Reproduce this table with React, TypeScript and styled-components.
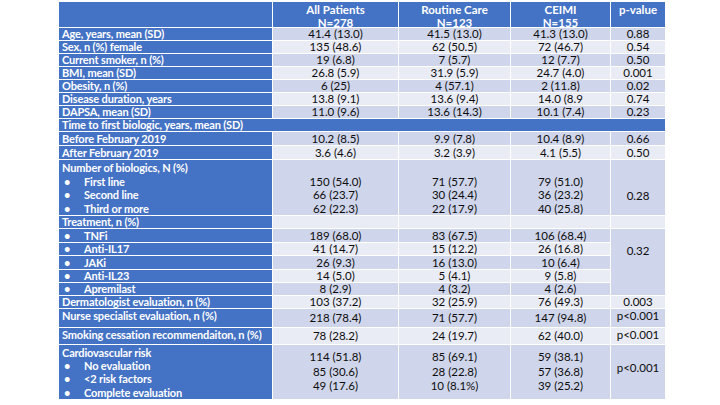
import React from "react";
import styled, { createGlobalStyle } from "styled-components";

/* ===================== STYLES ===================== */

const GlobalStyle = createGlobalStyle`
  html, body {
    margin: 0;
    padding: 0;
    background: #ffffff;
  }
  body {
    font-family: Lato, "Liberation Sans", sans-serif;
  }
`;

const Page = styled.div`
  width: 720px;
  height: 405px;
  padding: 2px 0 0 59px;
  box-sizing: border-box;
  background: #ffffff;
`;

const Table = styled.div`
  display: grid;
  grid-template-columns: 213px 125px 111px 99px 54px;
  grid-template-rows:
    25px repeat(8, 12px) 13px 13px 55px 12px 13px 12px 13px 12px 12px
    12px 18px 16px 54px;
  gap: 1px;
  font-size: 11px;
  line-height: 12px;
`;

type Tone = "dark" | "light";

const toneColor = (t: Tone) => (t === "dark" ? "#cfd5ea" : "#e9ebf5");

const HeadCell = styled.div`
  background: #4472c4;
  color: #ffffff;
  font-weight: 700;
  font-size: 11.5px;
  text-align: center;
  padding-top: 2px;
`;

const LabelCell = styled.div<{ $top?: boolean }>`
  background: #4472c4;
  color: #ffffff;
  font-weight: 700;
  letter-spacing: -0.15px;
  padding: ${({ $top }) => ($top ? "1px 0 0 3px" : "0 0 0 3px")};
  display: flex;
  flex-direction: column;
  justify-content: ${({ $top }) => ($top ? "flex-start" : "center")};
  white-space: nowrap;
  overflow: hidden;
`;

const SectionCell = styled(LabelCell)`
  grid-column: 1 / -1;
`;

const DataCell = styled.div<{ $tone: Tone; $rows?: number; $pt?: number }>`
  background: ${({ $tone }) => toneColor($tone)};
  color: #0d0d0d;
  font-size: 11.5px;
  text-align: center;
  display: flex;
  flex-direction: column;
  justify-content: ${({ $pt }) => ($pt !== undefined ? "flex-start" : "center")};
  padding-top: ${({ $pt }) => ($pt ?? 0)}px;
  grid-row: ${({ $rows }) => ($rows ? `span ${$rows}` : "auto")};
  white-space: nowrap;
`;

const Line = styled.div<{ $h?: number }>`
  height: ${({ $h }) => $h ?? 12}px;
  line-height: ${({ $h }) => $h ?? 12}px;
`;

const Bullet = styled.div<{ $h?: number }>`
  display: flex;
  height: ${({ $h }) => $h ?? 12}px;
  line-height: ${({ $h }) => $h ?? 12}px;
`;

const Dot = styled.span`
  width: 20px;
  padding-left: 2px;
`;

/* ===================== DATA ===================== */

interface Row {
  label: string;
  values: string[];
  p?: string;
}

const topRows: Row[] = [
  { label: "Age, years, mean (SD)", values: ["41.4 (13.0)", "41.5 (13.0)", "41.3 (13.0)"], p: "0.88" },
  { label: "Sex, n (%) female", values: ["135 (48.6)", "62 (50.5)", "72 (46.7)"], p: "0.54" },
  { label: "Current smoker, n (%)", values: ["19 (6.8)", "7 (5.7)", "12 (7.7)"], p: "0.50" },
  { label: "BMI, mean (SD)", values: ["26.8 (5.9)", "31.9 (5.9)", "24.7 (4.0)"], p: "0.001" },
  { label: "Obesity, n (%)", values: ["6 (25)", "4 (57.1)", "2 (11.8)"], p: "0.02" },
  { label: "Disease duration, years", values: ["13.8 (9.1)", "13.6 (9.4)", "14.0 (8.9"], p: "0.74" },
  { label: "DAPSA, mean (SD)", values: ["11.0 (9.6)", "13.6 (14.3)", "10.1 (7.4)"], p: "0.23" },
];

const timeRows: Row[] = [
  { label: "Before February 2019", values: ["10.2 (8.5)", "9.9 (7.8)", "10.4 (8.9)"], p: "0.66" },
  { label: "After February 2019", values: ["3.6 (4.6)", "3.2 (3.9)", "4.1 (5.5)"], p: "0.50" },
];

const biologicLines = ["First line", "Second line", "Third or more"];
const biologicValues = [
  ["150 (54.0)", "66 (23.7)", "62 (22.3)"],
  ["71 (57.7)", "30 (24.4)", "22 (17.9)"],
  ["79 (51.0)", "36 (23.2)", "40 (25.8)"],
];

const treatmentRows: Row[] = [
  { label: "TNFi", values: ["189 (68.0)", "83 (67.5)", "106 (68.4)"] },
  { label: "Anti-IL17", values: ["41 (14.7)", "15 (12.2)", "26 (16.8)"] },
  { label: "JAKi", values: ["26 (9.3)", "16 (13.0)", "10 (6.4)"] },
  { label: "Anti-IL23", values: ["14 (5.0)", "5 (4.1)", "9 (5.8)"] },
  { label: "Apremilast", values: ["8 (2.9)", "4 (3.2)", "4 (2.6)"] },
];

const evalRows: (Row & { top?: boolean })[] = [
  { label: "Dermatologist evaluation, n (%)", values: ["103 (37.2)", "32 (25.9)", "76 (49.3)"], p: "0.003" },
  { label: "Nurse specialist evaluation, n (%)", values: ["218 (78.4)", "71 (57.7)", "147 (94.8)"], p: "p<0.001", top: true },
  { label: "Smoking cessation recommendaiton, n (%)", values: ["78 (28.2)", "24 (19.7)", "62 (40.0)"], p: "p<0.001", top: true },
];

const cardioLines = ["No evaluation", "<2 risk factors", "Complete evaluation"];
const cardioValues = [
  ["114 (51.8)", "85 (30.6)", "49 (17.6)"],
  ["85 (69.1)", "28 (22.8)", "10 (8.1%)"],
  ["59 (38.1)", "57 (36.8)", "39 (25.2)"],
];

const tone = (i: number): Tone => (i % 2 === 0 ? "dark" : "light");

/* ===================== COMPONENT ===================== */

const SimpleRow: React.FC<{ row: Row; t: Tone; top?: boolean }> = ({ row, t, top }) => (
  <>
    <LabelCell $top={top}>{row.label}</LabelCell>
    {row.values.map((v, i) => (
      <DataCell key={i} $tone={t}>
        {v}
      </DataCell>
    ))}
    {row.p !== undefined && (
      <DataCell $tone={t} $pt={top ? 1 : undefined}>
        {row.p}
      </DataCell>
    )}
  </>
);

const App: React.FC = () => {
  return (
    <Page>
      <GlobalStyle />
      <Table>
        <HeadCell />
        <HeadCell>
          <Line $h={12.5}>All Patients</Line>
          <Line $h={12.5}>N=278</Line>
        </HeadCell>
        <HeadCell>
          <Line $h={12.5}>Routine Care</Line>
          <Line $h={12.5}>N=123</Line>
        </HeadCell>
        <HeadCell>
          <Line $h={12.5}>CEIMI</Line>
          <Line $h={12.5}>N=155</Line>
        </HeadCell>
        <HeadCell>
          <Line $h={12.5}>p-value</Line>
        </HeadCell>

        {topRows.map((r, i) => (
          <SimpleRow key={r.label} row={r} t={tone(i)} />
        ))}

        <SectionCell>Time to first biologic, years, mean (SD)</SectionCell>

        {timeRows.map((r, i) => (
          <SimpleRow key={r.label} row={r} t={tone(i)} />
        ))}

        <LabelCell $top>
          <Bullet $h={13.5}>Number of biologics, N (%)</Bullet>
          {biologicLines.map((l) => (
            <Bullet key={l} $h={13.5}>
              <Dot>•</Dot>
              {l}
            </Bullet>
          ))}
        </LabelCell>
        {biologicValues.map((col, i) => (
          <DataCell key={i} $tone="dark" $pt={1}>
            <Line $h={13.5} />
            {col.map((v) => (
              <Line key={v} $h={13.5}>
                {v}
              </Line>
            ))}
          </DataCell>
        ))}
        <DataCell $tone="dark" $pt={1}>
          <Line $h={13.5} />
          <Line $h={13.5} />
          <Line $h={15}>0.28</Line>
        </DataCell>

        <LabelCell>Treatment, n (%)</LabelCell>
        <DataCell $tone="light" />
        <DataCell $tone="light" />
        <DataCell $tone="light" />
        <DataCell $tone="light" />

        {treatmentRows.map((r, i) => (
          <React.Fragment key={r.label}>
            <LabelCell>
              <Bullet>
                <Dot>•</Dot>
                {r.label}
              </Bullet>
            </LabelCell>
            {r.values.map((v, j) => (
              <DataCell key={j} $tone={tone(i)}>
                {v}
              </DataCell>
            ))}
            {i === 0 && (
              <DataCell $tone="dark" $rows={5} $pt={16}>
                0.32
              </DataCell>
            )}
          </React.Fragment>
        ))}

        {evalRows.map((r, i) => (
          <SimpleRow key={r.label} row={r} t={tone(i + 1)} top={r.top} />
        ))}

        <LabelCell $top>
          <Line $h={13}>Cardiovascular risk</Line>
          {cardioLines.map((l) => (
            <Bullet key={l} $h={13.3}>
              <Dot>•</Dot>
              {l}
            </Bullet>
          ))}
        </LabelCell>
        {cardioValues.map((col, i) => (
          <DataCell key={i} $tone="dark">
            {col.map((v) => (
              <Line key={v} $h={14.5}>
                {v}
              </Line>
            ))}
          </DataCell>
        ))}
        <DataCell $tone="dark" $pt={17}>
          p&lt;0.001
        </DataCell>
      </Table>
    </Page>
  );
};

export default App;
